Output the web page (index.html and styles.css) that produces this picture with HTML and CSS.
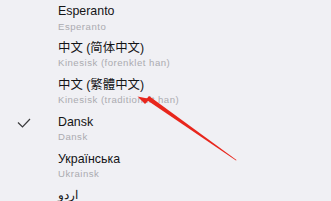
FILE: index.html
```html
<!DOCTYPE html>
<html>
<head>
<meta charset="utf-8">
<title>Sprog</title>
<link rel="stylesheet" href="styles.css">
</head>
<body>
<div class="screen">
    <ul class="lang-list">
        <li class="lang-row">
            <span class="check"></span>
            <div class="lang-text">
                <div class="lang-name">Esperanto</div>
                <div class="lang-sub">Esperanto</div>
            </div>
        </li>
        <li class="lang-row">
            <span class="check"></span>
            <div class="lang-text">
                <div class="lang-name">中文 (简体中文)</div>
                <div class="lang-sub">Kinesisk (forenklet han)</div>
            </div>
        </li>
        <li class="lang-row">
            <span class="check"></span>
            <div class="lang-text">
                <div class="lang-name">中文 (繁體中文)</div>
                <div class="lang-sub">Kinesisk (traditionelt han)</div>
            </div>
        </li>
        <li class="lang-row">
            <span class="check">
                <svg width="14" height="10" viewBox="0 0 14 10"><path d="M1 4.5 L5.5 9 L13 1" fill="none" stroke="#3a3a3c" stroke-width="1.2"/></svg>
            </span>
            <div class="lang-text">
                <div class="lang-name">Dansk</div>
                <div class="lang-sub">Dansk</div>
            </div>
        </li>
        <li class="lang-row">
            <span class="check"></span>
            <div class="lang-text">
                <div class="lang-name">Українська</div>
                <div class="lang-sub">Ukrainsk</div>
            </div>
        </li>
        <li class="lang-row">
            <span class="check"></span>
            <div class="lang-text">
                <div class="lang-name">اردو</div>
                <div class="lang-sub">Urdu</div>
            </div>
        </li>
    </ul>

    <!-- red annotation arrow -->
    <svg class="arrow" width="331" height="201" viewBox="0 0 331 201">
        <polygon points="146,99.5 149,96 236.5,160 236,160.6" fill="#e8261c"/>
        <polygon points="137.5,96.5 150,99 145,104" fill="#e8261c"/>
    </svg>
</div>
</body>
</html>
```

FILE: styles.css
```css
* { margin: 0; padding: 0; }

body {
    background: #f0f0f4;
}

.screen {
    width: 331px;
    height: 201px;
    position: relative;
    overflow: hidden;
    background: #f0f0f4;
    font-family: "Liberation Sans", Arial, "Noto Sans CJK SC", sans-serif;
}

.lang-list {
    list-style: none;
}

.lang-row {
    display: flex;
    align-items: flex-start;
    height: 36.9px;
    padding-top: 4px;
    box-sizing: border-box;
}

.check {
    width: 58px;
    display: flex;
    justify-content: flex-start;
    padding-left: 17px;
    padding-top: 3.5px;
    box-sizing: border-box;
}

.lang-name {
    font-size: 12.4px;
    line-height: 15px;
    color: #141416;
}

.lang-sub {
    font-size: 9.6px;
    line-height: 12px;
    letter-spacing: 0.5px;
    margin-top: 1.5px;
    color: #ababb0;
}

.arrow {
    position: absolute;
    top: 0;
    left: 0;
    pointer-events: none;
}
```
